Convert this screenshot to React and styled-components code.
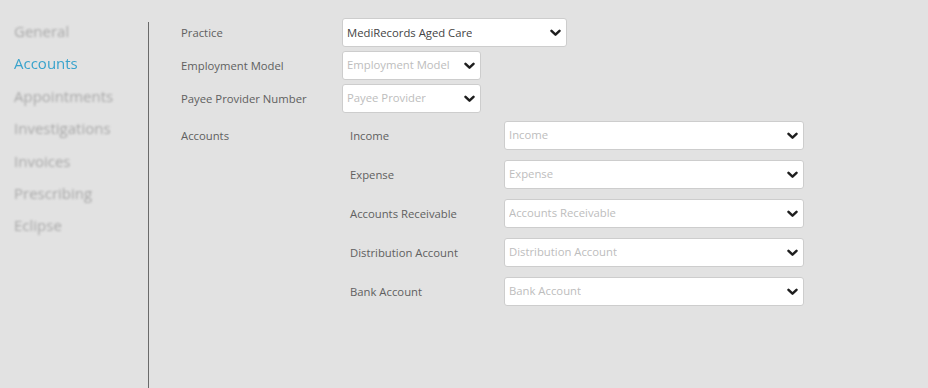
import React from 'react';
import styled, { createGlobalStyle } from 'styled-components';

const GlobalStyle = createGlobalStyle`
  html, body {
    margin: 0;
    padding: 0;
    background: #e2e2e2;
    font-family: "Open Sans", "Liberation Sans", sans-serif;
  }
`;

const Page = styled.div`
  display: flex;
  height: 388px;
  overflow: hidden;
`;

const Sidebar = styled.nav`
  width: 148px;
  padding: 15px 0 0 14px;
  box-sizing: border-box;
  display: flex;
  flex-direction: column;
`;

const NavItem = styled.div`
  font-size: 15px;
  line-height: 32.4px;
  color: ${props => (props.active ? '#39a3cc' : '#a9a9a9')};
  filter: ${props => (props.active ? 'blur(0.3px)' : 'blur(1.3px)')};
`;

const Divider = styled.div`
  width: 1px;
  margin-top: 22px;
  background: #6a6a6a;
`;

const Content = styled.section`
  padding: 18px 0 0 32px;
  display: flex;
  flex-direction: column;
  gap: 4px;
`;

const Row = styled.div`
  display: grid;
  grid-template-columns: 161px auto;
  align-items: ${props => (props.top ? 'start' : 'center')};
  margin-top: ${props => props.spaced || 0}px;
`;

const Label = styled.div`
  font-size: 11.3px;
  color: #606060;
  line-height: 28px;
  padding-top: 1px;
`;

const SubGrid = styled.div`
  display: flex;
  flex-direction: column;
  gap: 10px;
  margin-left: 8px;
`;

const SubRow = styled.div`
  display: grid;
  grid-template-columns: 154px auto;
  align-items: center;
`;

const SelectBox = styled.div`
  box-sizing: border-box;
  width: ${props => props.width}px;
  height: 29px;
  background: #fff;
  border: 1px solid #cdcdcd;
  border-radius: 3px;
  display: flex;
  align-items: center;
  justify-content: space-between;
  padding: 0 5px 0 4px;
`;

const SelectText = styled.span`
  font-size: 11.3px;
  color: ${props => (props.placeholder ? '#bdbdbd' : '#444')};
  padding-bottom: ${props => (props.placeholder ? 3 : 1)}px;
  white-space: nowrap;
  overflow: hidden;
`;

const Chevron = () => (
  <svg width="11" height="8" viewBox="0 0 11 8">
    <polyline
      points="1.5,1.8 5.5,5.6 9.5,1.8"
      fill="none"
      stroke="#1e1e1e"
      strokeWidth="2.5"
      strokeLinecap="round"
      strokeLinejoin="round"
    />
  </svg>
);

const Select = ({ width, value, placeholder }) => (
  <SelectBox width={width}>
    <SelectText placeholder={value ? undefined : 1}>{value || placeholder}</SelectText>
    <Chevron />
  </SelectBox>
);

const navItems = ['General', 'Accounts', 'Appointments', 'Investigations', 'Invoices', 'Prescribing', 'Eclipse'];

const accounts = ['Income', 'Expense', 'Accounts Receivable', 'Distribution Account', 'Bank Account'];

export default function App() {
  return (
    <Page>
      <GlobalStyle />
      <Sidebar>
        {navItems.map(item => (
          <NavItem key={item} active={item === 'Accounts'}>
            {item}
          </NavItem>
        ))}
      </Sidebar>
      <Divider />
      <Content>
        <Row>
          <Label>Practice</Label>
          <Select width={225} value="MediRecords Aged Care" />
        </Row>
        <Row>
          <Label>Employment Model</Label>
          <Select width={139} placeholder="Employment Model" />
        </Row>
        <Row>
          <Label>Payee Provider Number</Label>
          <Select width={139} placeholder="Payee Provider" />
        </Row>
        <Row top spaced={4}>
          <Label>Accounts</Label>
          <SubGrid>
            {accounts.map(name => (
              <SubRow key={name}>
                <Label>{name}</Label>
                <Select width={300} placeholder={name} />
              </SubRow>
            ))}
          </SubGrid>
        </Row>
      </Content>
    </Page>
  );
}
